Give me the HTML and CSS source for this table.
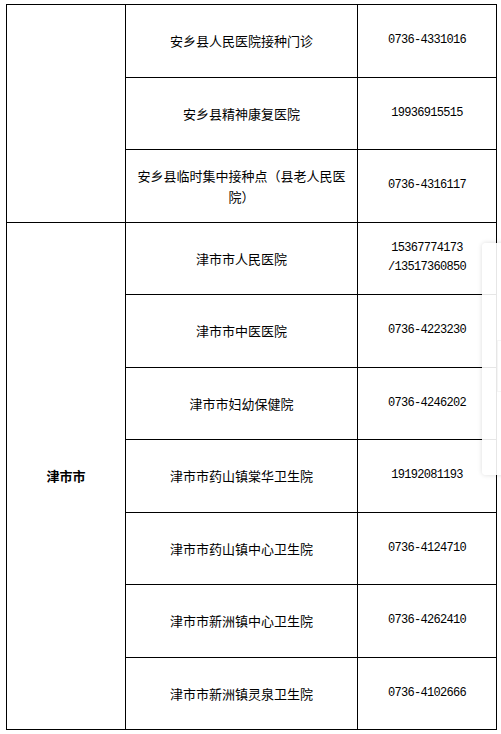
FILE: index.html
```html
<!DOCTYPE html>
<html lang="zh-CN">
<head>
<meta charset="utf-8">
<title>接种点</title>
<link rel="stylesheet" href="styles.css">
</head>
<body>
<div class="page">
  <table class="sites">
    <colgroup>
      <col class="c-area">
      <col class="c-name">
      <col class="c-tel">
    </colgroup>
    <tbody>
      <tr>
        <td class="area" rowspan="3"></td>
        <td class="name">安乡县人民医院接种门诊</td>
        <td class="tel">0736-4331016</td>
      </tr>
      <tr>
        <td class="name">安乡县精神康复医院</td>
        <td class="tel">19936915515</td>
      </tr>
      <tr>
        <td class="name">安乡县临时集中接种点（县老人民医院）</td>
        <td class="tel">0736-4316117</td>
      </tr>
      <tr>
        <td class="area" rowspan="7">津市市</td>
        <td class="name">津市市人民医院</td>
        <td class="tel">15367774173 /13517360850</td>
      </tr>
      <tr>
        <td class="name">津市市中医医院</td>
        <td class="tel">0736-4223230</td>
      </tr>
      <tr>
        <td class="name">津市市妇幼保健院</td>
        <td class="tel">0736-4246202</td>
      </tr>
      <tr>
        <td class="name">津市市药山镇棠华卫生院</td>
        <td class="tel">19192081193</td>
      </tr>
      <tr>
        <td class="name">津市市药山镇中心卫生院</td>
        <td class="tel">0736-4124710</td>
      </tr>
      <tr>
        <td class="name">津市市新洲镇中心卫生院</td>
        <td class="tel">0736-4262410</td>
      </tr>
      <tr>
        <td class="name">津市市新洲镇灵泉卫生院</td>
        <td class="tel">0736-4102666</td>
      </tr>
    </tbody>
  </table>
  <div class="side-panel"><div class="side-inner"></div></div>
</div>
</body>
</html>
```

FILE: styles.css
```css
html, body {
  margin: 0;
  padding: 0;
  background: #fff;
}
.page {
  position: relative;
  padding: 4px 0 0 6px;
  width: 495px;
  height: 730px;
  overflow: hidden;
}
.sites {
  border-collapse: collapse;
  table-layout: fixed;
  width: 490px;
  font-family: "Noto Sans CJK SC", sans-serif;
  font-size: 13px;
  line-height: 21px;
  color: #000;
}
.c-area { width: 119px; }
.c-name { width: 232px; }
.c-tel { width: 139px; }
.sites tr {
  height: 72.5px;
}
.sites td {
  border: 1px solid #000;
  padding: 0 9px;
  text-align: center;
  vertical-align: middle;
}
.area {
  font-weight: bold;
}
.tel {
  font-family: "Liberation Mono", monospace;
  font-size: 12px;
  letter-spacing: -0.7px;
  line-height: 19px;
}
.side-panel {
  position: absolute;
  left: 482px;
  top: 243px;
  width: 40px;
  height: 232px;
  border-radius: 4px;
  background: rgba(255, 255, 255, 0.9);
  box-shadow: 0 0 5px rgba(0, 0, 0, 0.14);
}
.side-inner {
  position: absolute;
  left: 15px;
  top: 97px;
  width: 30px;
  height: 50px;
  border: 1px solid rgba(0, 0, 0, 0.04);
}
```
